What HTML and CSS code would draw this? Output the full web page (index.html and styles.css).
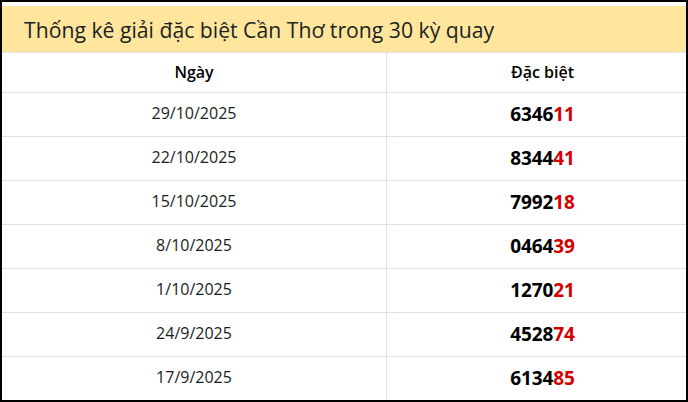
FILE: index.html
```html
<!DOCTYPE html>
<html lang="vi">
<head>
<meta charset="utf-8">
<link rel="stylesheet" href="styles.css">
</head>
<body>
<div class="frame">
  <div class="title">Thống kê giải đặc biệt Cần Thơ trong 30 kỳ quay</div>
  <div class="table">
    <div class="row head">
      <div class="cell">Ngày</div>
      <div class="cell right">Đặc biệt</div>
    </div>
    <div class="row">
      <div class="cell">29/10/2025</div>
      <div class="cell right num">6346<span class="red">11</span></div>
    </div>
    <div class="row">
      <div class="cell">22/10/2025</div>
      <div class="cell right num">8344<span class="red">41</span></div>
    </div>
    <div class="row">
      <div class="cell">15/10/2025</div>
      <div class="cell right num">7992<span class="red">18</span></div>
    </div>
    <div class="row">
      <div class="cell">8/10/2025</div>
      <div class="cell right num">0464<span class="red">39</span></div>
    </div>
    <div class="row">
      <div class="cell">1/10/2025</div>
      <div class="cell right num">1270<span class="red">21</span></div>
    </div>
    <div class="row">
      <div class="cell">24/9/2025</div>
      <div class="cell right num">4528<span class="red">74</span></div>
    </div>
    <div class="row">
      <div class="cell">17/9/2025</div>
      <div class="cell right num">6134<span class="red">85</span></div>
    </div>
  </div>
</div>
</body>
</html>
```
FILE: styles.css
```css
html, body {
  margin: 0;
  padding: 0;
  background: #fff;
}
.frame {
  box-sizing: border-box;
  width: 688px;
  height: 402px;
  border: 2px solid #000;
  padding-top: 4px;
  overflow: hidden;
  font-family: "Open Sans", "Noto Sans", sans-serif;
  color: #212529;
}
.title {
  height: 46px;
  background: #ffe69c;
  display: flex;
  align-items: center;
  padding-left: 22px;
  font-size: 21.2px;
  font-weight: 500;
  color: #1c1f23;
  border-bottom: 1px solid #dee2e6;
}
.row {
  display: grid;
  grid-template-columns: 384px 1fr;
  height: 43px;
  border-bottom: 1px solid #dee2e6;
}
.row.head {
  height: 39px;
}
.cell {
  display: flex;
  align-items: center;
  justify-content: center;
  font-size: 16px;
  padding-bottom: 4px;
  color: #1a1d20;
}
.cell.right {
  border-left: 1px solid #dee2e6;
  padding-left: 12px;
}
.head .cell {
  font-weight: 600;
  color: #000;
  font-size: 16px;
  padding-bottom: 2px;
}
.num {
  font-weight: 700;
  font-size: 19px;
  color: #000;
  letter-spacing: -0.1px;
  padding-bottom: 1px;
}
.red {
  color: #d40000;
}
```
